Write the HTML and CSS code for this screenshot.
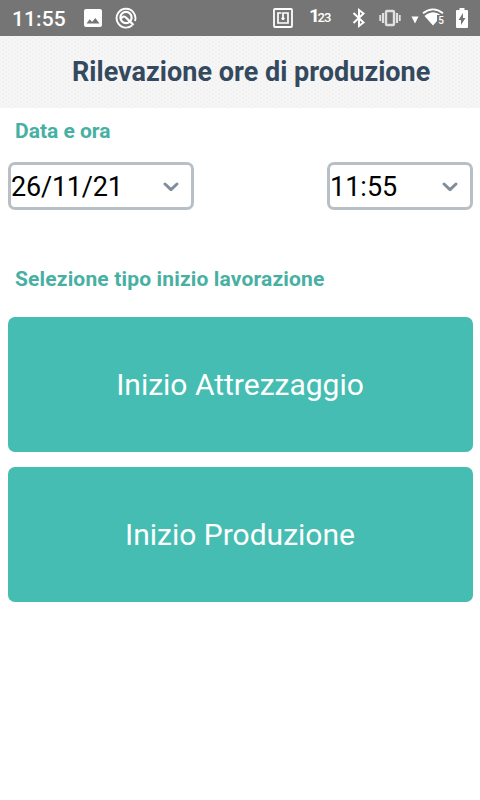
FILE: index.html
```html
<!DOCTYPE html>
<html lang="it">
<head>
<meta charset="utf-8">
<title>Rilevazione ore di produzione</title>
<link rel="stylesheet" href="styles.css">
</head>
<body>
<div class="status">
  <span class="clock">11:55</span>
  <svg class="ic-photo" width="18" height="18" viewBox="0 0 18 18"><path fill="#fff" fill-rule="evenodd" d="M2 0h14a2 2 0 0 1 2 2v14a2 2 0 0 1-2 2H2a2 2 0 0 1-2-2V2a2 2 0 0 1 2-2zM2.500 14.500h13L11.300 9l-3.200 4-2.400-2.700z"/></svg>
  <svg class="ic-search" width="22" height="22" viewBox="0 0 22 22" fill="none" stroke="#fff"><path stroke-width="1.900" d="M17.200 18.300A9.400 9.400 0 1 1 20 14"/><circle cx="11" cy="10.500" r="5.600" stroke-width="2.200"/><path stroke-width="2.200" d="M6 11.500c2-2.500 3.500-2.500 5.200-.8L18.500 18"/></svg>
  <span class="spacer"></span>
  <svg class="ic-nfc" width="20" height="20" viewBox="0 0 20 20" fill="none" stroke="#fff"><rect x="1" y="1" width="18" height="18" rx="1" stroke-width="1.800"/><path stroke-width="1.700" d="M8.500 5H5v10h10V5h-5v6"/><circle cx="10" cy="10.500" r="1.600" fill="#fff" stroke="none"/></svg>
  <span class="digits"><b>1</b>23</span>
  <svg class="ic-bt" width="14" height="20" viewBox="0 0 14 20" fill="none" stroke="#fff" stroke-width="2"><path d="M1.500 5l10 9.500L7 18V2l4.500 3.500L1.500 15"/></svg>
  <svg class="ic-vibrate" width="22" height="18" viewBox="0 0 22 18" fill="none" stroke="#e0e0e0"><rect x="7" y="2" width="8" height="14" rx="1" stroke-width="2.400"/><path stroke-width="2.200" d="M4 4v10M18 4v10"/><path stroke-width="1.800" d="M1.200 6v6M20.800 6v6"/></svg>
  <svg class="ic-wifi" width="35" height="20" viewBox="0 0 35 20"><path fill="#fff" d="M.5 8.500h7L4 15.500z"/><path fill="none" stroke="#fff" stroke-width="1.800" d="M12 5.200Q22 -2.500 32 5.200"/><path fill="#fff" d="M13.500 8Q22 1 29.500 7H26v6L22 17.500z"/><text x="27.300" y="15.500" class="band">5</text></svg>
  <svg class="ic-battery" width="12" height="20" viewBox="0 0 12 20"><path fill="#fff" d="M3.500 0h5v2H11a1 1 0 0 1 1 1v16a1 1 0 0 1-1 1H1a1 1 0 0 1-1-1V3a1 1 0 0 1 1-1h2.500z"/><path fill="#757575" d="M7 5L2.500 12H5v5l4.500-7H7z"/></svg>
</div>
<header class="header"><h1>Rilevazione ore di produzione</h1></header>
<main>
  <h2>Data e ora</h2>
  <div class="fields">
    <div class="select date"><span>26/11/21</span><svg width="18" height="12" viewBox="0 0 18 12"><path d="M3 3l6 5.700L15 3"/></svg></div>
    <div class="select time"><span>11:55</span><svg width="18" height="12" viewBox="0 0 18 12"><path d="M3 3l6 5.700L15 3"/></svg></div>
  </div>
  <h2 class="second">Selezione tipo inizio lavorazione</h2>
  <div class="actions">
    <button>Inizio Attrezzaggio</button>
    <button>Inizio Produzione</button>
  </div>
</main>
</body>
</html>
```
FILE: styles.css
```css
* { box-sizing: border-box; }
body { margin: 0; width: 480px; height: 800px; overflow: hidden; background: #fff; font-family: Roboto, "Liberation Sans", sans-serif; }
svg { display: block; flex: none; }
.status { height: 36px; background: #757575; display: flex; align-items: center; color: #fff; padding: 0 12px; }
.clock { font-size: 21px; font-weight: 500; line-height: 36px; letter-spacing: 0.1px; width: 72px; padding-top: 2px; }
.ic-photo { margin-right: 13px; }
.spacer { flex: 1; }
.ic-nfc { margin-right: 16px; }
.digits { font-size: 13px; letter-spacing: -0.8px; width: 21px; margin-right: 22px; line-height: 20px; padding-bottom: 2px; white-space: nowrap; font-weight: 500; }
.digits b { font-size: 19px; letter-spacing: -2.5px; }
.ic-bt { margin-right: 13px; }
.ic-vibrate { margin-right: 10px; }
.ic-wifi { margin-right: 10px; overflow: visible; }
.band { font: 500 10px Roboto, sans-serif; fill: #fff; }
.header { height: 72px; background-color: #f6f6f6; background-image: radial-gradient(#eee 0.8px, transparent 1.2px), radial-gradient(#eee 0.8px, transparent 1.2px); background-size: 6px 4px; background-position: 0 0, 3px 2px; padding-left: 72px; }
h1 { margin: 0; font-size: 27px; line-height: 72px; font-weight: 700; color: #34495e; letter-spacing: 0.02px; white-space: nowrap; }
main { padding: 0 7px 0 8px; }
h2 { margin: 0; padding: 11px 7px 0; font-size: 21px; line-height: 24px; font-weight: 700; color: #48b0a3; white-space: nowrap; }
.fields { display: flex; justify-content: space-between; margin-top: 19px; }
.select { height: 48px; border: 3px solid #b8c0c7; border-radius: 7px; display: flex; align-items: center; justify-content: space-between; font-size: 27px; color: #000; padding-right: 11px; }
.select span { padding-top: 1px; }
.select svg { margin-top: 2px; }
.select path { fill: none; stroke: #808d9b; stroke-width: 3; stroke-linecap: round; stroke-linejoin: round; }
.date { width: 186px; letter-spacing: -0.2px; }
.time { width: 146px; }
.second { padding-top: 57px; letter-spacing: 0.16px; }
.actions { display: grid; gap: 15px; margin-top: 26px; }
button { height: 135px; border: 0; border-radius: 7px; background: #45bdb2; color: #fff; font: 400 30px Roboto, "Liberation Sans", sans-serif; padding: 0 1px 0 0; }
```
